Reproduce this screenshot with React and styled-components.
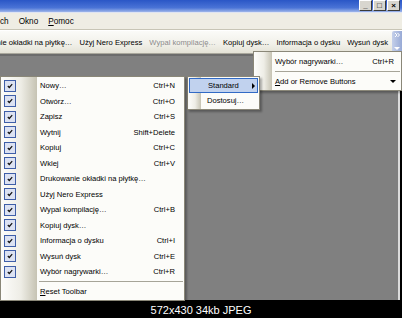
import React from 'react';
import styled, { createGlobalStyle } from 'styled-components';

const GlobalStyle = createGlobalStyle`
  html, body { margin: 0; padding: 0; background: #000; }
  body { font-family: "Liberation Sans", Arial, sans-serif; }
`;

const Page = styled.div`
  width: 402px;
  height: 318px;
  display: flex;
  flex-direction: column;
  background: #000;
  overflow: hidden;
`;

const Window = styled.div`
  position: relative;
  height: 300px;
  display: flex;
  flex-direction: column;
  font-size: 7.6px;
  color: #000;
`;

const TitleBar = styled.div`
  height: 12px;
  display: flex;
  justify-content: flex-end;
  align-items: flex-start;
  padding-right: 2px;
  gap: 1px;
  background: linear-gradient(#2a56c6, #4a73d6 65%, #9fb6ea);
`;

const WinButton = styled.div`
  width: 11px;
  height: 9px;
  display: flex;
  align-items: center;
  justify-content: center;
  background: #d8d6cf;
  border: 1px solid;
  border-color: #fff #3a3a3a #3a3a3a #fff;
  font-size: 8px;
  font-weight: bold;
  line-height: 1;
`;

const MenuBar = styled.div`
  height: 16px;
  display: flex;
  align-items: center;
  background: #efede4;
  border-top: 1px solid #dfe4f2;
  border-bottom: 1px solid #c8c5b6;
`;

const MenuTitle = styled.span`
  padding: 0 5px;
  margin-left: ${p => p.$shift || 0}px;
  font-size: 8.2px;
`;

const U = styled.span`
  text-decoration: underline;
`;

const Toolbar = styled.div`
  height: 22px;
  display: flex;
  align-items: stretch;
  background: linear-gradient(#fbfbf8, #f1f0e9 60%, #e4e2d6);
  border-top: 1px solid #fff;
  border-bottom: 1px solid #a9a79c;
  overflow: hidden;
`;

const ToolRow = styled.div`
  flex: 1;
  display: flex;
  justify-content: flex-end;
  align-items: center;
  overflow: hidden;
  white-space: nowrap;
`;

const ToolButton = styled.span`
  padding: 0 4px 0 3px;
  flex-shrink: 0;
  color: ${p => (p.$dim ? '#8b8b8b' : '#000')};
`;

const Chevron = styled.div`
  width: 10px;
  display: flex;
  flex-direction: column;
  justify-content: space-between;
  align-items: center;
  padding: 2px 0 3px;
  background: linear-gradient(to right, #c5d0ea, #98aad6);
  border-radius: 2px 0 0 2px;
`;

const Workspace = styled.div`
  flex: 1;
  background: #808080;
  border-top: 2px solid #6c6c6c;
  border-right: 2px solid #dcdcdc;
  margin-right: 2px;
`;

const Popup = styled.div`
  position: absolute;
  left: ${p => p.$x}px;
  top: ${p => p.$y}px;
  width: ${p => p.$w}px;
  z-index: ${p => p.$z || 1};
  padding: 1px 0;
  border: 1px solid #8a8778;
  box-shadow: 2px 2px 2px rgba(0, 0, 0, 0.3);
  background: linear-gradient(
    to right,
    #fdfdfb 0,
    #eeede6 ${p => p.$strip * 0.55}px,
    #c6c3b3 ${p => p.$strip}px,
    #fcfcf9 ${p => p.$strip}px
  );
`;

const Row = styled.div`
  height: ${p => p.$h || 15.5}px;
  display: grid;
  grid-template-columns: ${p => p.$strip}px 1fr auto;
  align-items: center;
  padding-right: ${p => p.$pr || 9}px;
  white-space: nowrap;
  box-sizing: border-box;
  ${p =>
    p.$active &&
    `
    background: #c1d2ee;
    border: 1px solid #316ac5;
    margin: 0 1px;
  `}
`;

const Label = styled.span`
  padding-left: ${p => p.$pl || 3}px;
`;

const Shortcut = styled.span`
  text-align: right;
`;

const Check = styled.span`
  width: 10px;
  height: 10px;
  margin-left: 3px;
  display: flex;
  align-items: center;
  justify-content: center;
  border: 1px solid #3e5ea8;
  background: #dce2f2;
`;

const Separator = styled.div`
  height: 4px;
  margin-left: ${p => p.$left}px;
  margin-right: 1px;
  display: flex;
  align-items: center;
  &::after {
    content: '';
    flex: 1;
    height: 1px;
    background: #a6a498;
  }
`;

const Caption = styled.div`
  flex: 1;
  display: flex;
  align-items: center;
  justify-content: center;
  color: #fff;
  font-size: 11px;
  padding-top: 2px;
`;

const CheckMark = () => (
  <svg width="6" height="6" viewBox="0 0 6 6">
    <path d="M0.8 3 L2.3 4.5 L5.2 1.2" fill="none" stroke="#111" strokeWidth="1.2" />
  </svg>
);

const RightArrow = () => (
  <svg width="3" height="6" viewBox="0 0 3 6">
    <path d="M0 0 L3 3 L0 6 Z" fill="#000" />
  </svg>
);

const DownArrow = ({ color = '#000' }) => (
  <svg width="6" height="3" viewBox="0 0 6 3">
    <path d="M0 0 L6 0 L3 3 Z" fill={color} />
  </svg>
);

const items = [
  ['Nowy…', 'Ctrl+N'],
  ['Otwórz…', 'Ctrl+O'],
  ['Zapisz', 'Ctrl+S'],
  ['Wytnij', 'Shift+Delete'],
  ['Kopiuj', 'Ctrl+C'],
  ['Wklej', 'Ctrl+V'],
  ['Drukowanie okładki na płytkę…', ''],
  ['Użyj Nero Express', ''],
  ['Wypal kompilację…', 'Ctrl+B'],
  ['Kopiuj dysk…', ''],
  ['Informacja o dysku', 'Ctrl+I'],
  ['Wysuń dysk', 'Ctrl+E'],
  ['Wybór nagrywarki…', 'Ctrl+R'],
];

const tools = [
  ['Drukowanie okładki na płytkę…', false],
  ['Użyj Nero Express', false],
  ['Wypal kompilację…', true],
  ['Kopiuj dysk…', false],
  ['Informacja o dysku', false],
  ['Wysuń dysk', false],
];

export default function App() {
  return (
    <Page>
      <GlobalStyle />
      <Window>
        <TitleBar>
          <WinButton>_</WinButton>
          <WinButton>□</WinButton>
          <WinButton>×</WinButton>
        </TitleBar>
        <MenuBar>
          <MenuTitle $shift={-5}>ch</MenuTitle>
          <MenuTitle>Okno</MenuTitle>
          <MenuTitle>
            <U>P</U>omoc
          </MenuTitle>
        </MenuBar>
        <Toolbar>
          <ToolRow>
            {tools.map(([t, dim]) => (
              <ToolButton key={t} $dim={dim}>
                {t}
              </ToolButton>
            ))}
          </ToolRow>
          <Chevron>
            <svg width="5" height="4" viewBox="0 0 5 4">
              <path d="M0 0 L2 2 L0 4 M2.5 0 L4.5 2 L2.5 4" fill="none" stroke="#fff" strokeWidth="1" />
            </svg>
            <DownArrow color="#fff" />
          </Chevron>
        </Toolbar>
        <Workspace />

        <Popup $x={253} $y={51} $w={147} $strip={18}>
          <Row $strip={18} $h={16} $pr={7}>
            <span />
            <Label>Wybór nagrywarki…</Label>
            <Shortcut>Ctrl+R</Shortcut>
          </Row>
          <Separator $left={21} />
          <Row $strip={18} $h={16} $pr={5}>
            <span />
            <Label>
              <U>A</U>dd or Remove Buttons
            </Label>
            <DownArrow />
          </Row>
        </Popup>

        <Popup $x={187} $y={76} $w={71} $strip={13} $z={2}>
          <Row $strip={13} $h={15} $pr={2} $active>
            <span />
            <Label $pl={5}>Standard</Label>
            <RightArrow />
          </Row>
          <Row $strip={13} $h={15} $pr={2}>
            <span />
            <Label $pl={6}>Dostosuj…</Label>
            <span />
          </Row>
        </Popup>

        <Popup $x={0} $y={76} $w={183} $strip={36} $z={3}>
          {items.map(([t, s]) => (
            <Row key={t} $strip={36}>
              <Check>
                <CheckMark />
              </Check>
              <Label>{t}</Label>
              <Shortcut>{s}</Shortcut>
            </Row>
          ))}
          <Separator $left={38} />
          <Row $strip={36}>
            <span />
            <Label>
              <U>R</U>eset Toolbar
            </Label>
            <span />
          </Row>
        </Popup>
      </Window>
      <Caption>572x430 34kb JPEG</Caption>
    </Page>
  );
}
